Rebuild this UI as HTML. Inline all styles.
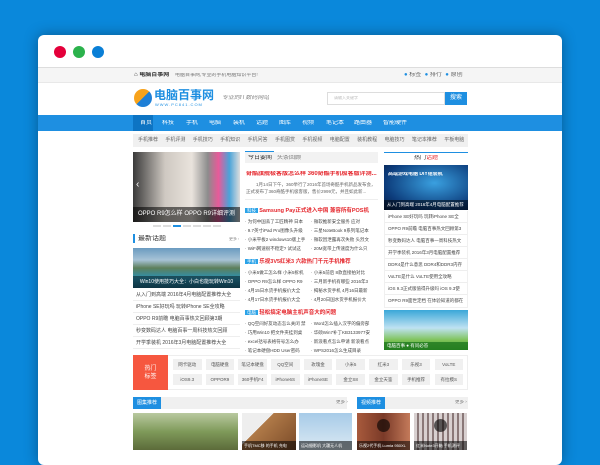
<!DOCTYPE html>
<html><head><meta charset="utf-8"><style>
*{margin:0;padding:0;box-sizing:border-box}
body{width:600px;height:450px;overflow:hidden;background:#0a88db;font-family:"Liberation Sans","Noto Sans CJK SC",sans-serif;position:relative;font-size:6px;color:#444;line-height:1}
.win{position:absolute;left:38px;top:35px;width:524px;height:430px;background:#fff;border-radius:6px;box-shadow:0 0 14px rgba(0,0,0,.35);overflow:hidden}
.a{position:absolute}
.dot{position:absolute;top:11px;width:12px;height:12px;border-radius:50%}
.t{white-space:nowrap;overflow:hidden}
.red{color:#e5262c}
.l12>div{line-height:12px;height:12px}
.g>div{line-height:9px;height:9px}
</style></head><body>
<div class="win">
<div class="dot" style="left:16px;background:#e4003a"></div>
<div class="dot" style="left:35px;background:#2bb24c"></div>
<div class="dot" style="left:54px;background:#0a7fd6"></div>
<div class="a" style="left:0;top:32px;width:524px;height:16px;background:#f5f5f5;border-top:1px solid #ddd;border-bottom:1px solid #e8e8e8"></div>
</div>
<div class="a t" style="left:134px;top:72px;font-weight:bold;color:#333">&#8962; 电脑百事网</div>
<div class="a t" style="left:175px;top:73px;color:#777;font-size:5px">电脑百事网,专业的手机电脑知识平台!</div>
<div class="a t" style="left:404px;top:72px;color:#666"><span style="color:#1e8fe1">●</span> 标签 &nbsp;<span style="color:#1e8fe1">●</span> 排行 &nbsp;<span style="color:#1e8fe1">●</span> 原创</div>
<div class="a" style="left:134px;top:89px;width:18px;height:18px;border-radius:50%;background:linear-gradient(135deg,#f7a21b 50%,#1e7fd6 50%)"></div>
<div class="a t" style="left:154px;top:89px;font-size:12px;font-weight:bold;color:#1e8fe1">电脑百事网</div>
<div class="a t" style="left:155px;top:103px;font-size:4px;color:#1e8fe1;letter-spacing:1px">WWW.PC841.COM</div>
<div class="a t" style="left:222px;top:95px;font-size:6px;color:#888;font-style:italic">专业的IT数码网站</div>
<div class="a" style="left:327px;top:92px;width:118px;height:13px;border:1px solid #ddd;background:#fff"></div>
<div class="a t" style="left:334px;top:96px;font-size:4px;color:#bbb">请输入关键字</div>
<div class="a" style="left:445px;top:92px;width:22px;height:13px;background:#1e8fe1;color:#fff;text-align:center;line-height:13px">搜索</div>
<div class="a" style="left:38px;top:115px;width:524px;height:16px;background:#1e8fe1"></div>
<div class="a" style="left:133px;top:115px;width:20px;height:16px;background:#0d74c3"></div>
<div class="a t" style="left:140px;top:120px;color:#fff">首页</div>
<div class="a t" style="left:162px;top:120px;color:#fff">科技</div>
<div class="a t" style="left:186px;top:120px;color:#fff">手机</div>
<div class="a t" style="left:209px;top:120px;color:#fff">电脑</div>
<div class="a t" style="left:233px;top:120px;color:#fff">装机</div>
<div class="a t" style="left:256px;top:120px;color:#fff">话题</div>
<div class="a t" style="left:279px;top:120px;color:#fff">图库</div>
<div class="a t" style="left:302px;top:120px;color:#fff">视频</div>
<div class="a t" style="left:326px;top:120px;color:#fff">笔记本</div>
<div class="a t" style="left:354px;top:120px;color:#fff">路由器</div>
<div class="a t" style="left:383px;top:120px;color:#fff">智能硬件</div>
<div class="a t" style="left:133px;top:134px;width:335px;height:13px;background:#f0f0f0;color:#666;font-size:5px;line-height:13px;padding-left:5px;word-spacing:6px">手机推荐 手机评测 手机技巧 手机知识 手机问答 手机图赏 手机视频 电脑配置 装机教程 电脑技巧 笔记本推荐 平板电脑</div>
<div class="a" style="left:133px;top:152px;width:107px;height:70px;background:linear-gradient(90deg,#3a3a3a 0,#cfc9c2 30%,#e9e3dc 55%,#8c8c8c 70%,#e85a9a 80%,#4aa3d8 90%,#ddd 100%)"></div>
<div class="a t" style="left:133px;top:207px;width:107px;height:15px;background:rgba(0,0,0,.55);color:#fff;font-size:6px;line-height:15px;text-align:center">OPPO R9怎么样 OPPO R9详细评测</div>
<div class="a t" style="left:136px;top:180px;color:#fff;font-size:10px">‹</div>
<div class="a" style="left:153px;top:225px;width:70px;height:2px;background:repeating-linear-gradient(90deg,#ddd 0 8px,transparent 8px 10px)"></div>
<div class="a" style="left:173px;top:225px;width:8px;height:2px;background:#1e8fe1"></div>
<div class="a" style="left:133px;top:234px;width:2px;height:9px;background:#1e8fe1"></div>
<div class="a t" style="left:138px;top:235px;font-size:7px;color:#333">最新话题</div>
<div class="a t" style="left:229px;top:237px;font-size:4px;color:#888">更多 ›</div>
<div class="a" style="left:133px;top:248px;width:107px;height:40px;background:linear-gradient(180deg,#6a9bc0 0,#a7c3d6 30%,#5d7f5a 50%,#2c8fb0 75%,#1a5f7a 100%)"></div>
<div class="a t" style="left:133px;top:276px;width:107px;height:12px;background:rgba(0,0,0,.45);color:#fff;font-size:5px;line-height:12px;text-align:center">Win10使用技巧大全：小白也能玩转Win10</div>
<div class="a l12" style="left:133px;top:289px;width:107px;font-size:5px;color:#444">
<div class="t" style="border-bottom:1px solid #eee;padding-left:3px">从入门到高端 2016年4月电脑配置推荐大全</div>
<div class="t" style="border-bottom:1px solid #eee;padding-left:3px">iPhone SE好玩吗 玩转iPhone SE全攻略</div>
<div class="t" style="border-bottom:1px solid #eee;padding-left:3px">OPPO R9前瞻 电脑百事热文回顾第3期</div>
<div class="t" style="border-bottom:1px solid #eee;padding-left:3px">秒变数码达人 电脑百事一周科技热文回顾</div>
<div class="t" style="border-bottom:1px solid #eee;padding-left:3px">开学季装机 2016年3月电脑配置推荐大全</div>
</div>
<div class="a" style="left:245px;top:152px;width:133px;height:11px;background:#f2f2f2"></div>
<div class="a" style="left:245px;top:151px;width:29px;height:1px;background:#1e8fe1"></div>
<div class="a t" style="left:248px;top:155px;font-size:6px;color:#333">今日要闻 &nbsp;&nbsp;<span style="color:#777">头条回顾</span></div>
<div class="a t red" style="left:246px;top:171px;font-weight:bold;font-size:6px;width:132px">奇酷旗舰极客版怎么样 360奇酷手机极客版评测...</div>
<div class="a" style="left:246px;top:181px;width:132px;font-size:4.5px;color:#666;line-height:7px;text-indent:10px">1月14日下午，360举行了2016年首场奇酷手机新品发布会，正式发布了360奇酷手机极客版，售价2999元，并且如此新...</div>
<div class="a" style="left:245px;top:199px;width:133px;height:1px;background:#eee"></div>
<div class="a" style="left:245px;top:205px;width:133px;font-size:4.5px;color:#444">
<div style="height:11px;line-height:11px" class="t"><span style="background:#2ba3e8;color:#fff;padding:0 2px">科技</span> <b class="red" style="font-size:5.5px">Samsung Pay正式进入中国 兼容所有POS机</b></div>
<div class="g" style="display:grid;grid-template-columns:66px 66px;margin-top:1px">
<div class="t">· 为何中国丢了工匠精神 日本</div><div class="t">· 微软推新安全服务 应对</div>
<div class="t">· 9.7英寸iPad Pro图像头升级</div><div class="t">· 三星NoteBook 9系列笔记本</div>
<div class="t">· 小米平板2 windows10版上手</div><div class="t">· 微软因泄露再次失败 头烈文</div>
<div class="t">· WiFi网速很不稳定? 试试这</div><div class="t">· 20M宽带上传速度为什么只</div>
</div>
<div style="height:11px;line-height:11px;margin-top:3px" class="t"><span style="background:#2ba3e8;color:#fff;padding:0 2px">手机</span> <b class="red" style="font-size:5.5px">乐视3V5红米3 六款热门千元手机推荐</b></div>
<div class="g" style="display:grid;grid-template-columns:66px 66px;margin-top:1px">
<div class="t">· 小米5做工怎么样 小米5拆机</div><div class="t">· 小米5前后 8款直接拍对比</div>
<div class="t">· OPPO R9怎么样 OPPO R9</div><div class="t">· 三月新手机有哪些 2016年3</div>
<div class="t">· 4月15日水货手机报价大全</div><div class="t">· 揭秘水货手机 4月16日最新</div>
<div class="t">· 4月17日水货手机报价大全</div><div class="t">· 4月20日国水货手机报价大</div>
</div>
<div style="height:11px;line-height:11px;margin-top:3px" class="t"><span style="background:#2ba3e8;color:#fff;padding:0 2px">电脑</span> <b class="red" style="font-size:5.5px">轻松搞定电脑主机声音大的问题</b></div>
<div class="g" style="display:grid;grid-template-columns:66px 66px;margin-top:1px">
<div class="t">· QQ空间好友动态怎么关闭 禁</div><div class="t">· Word怎么插入汉字的偏旁部</div>
<div class="t">· 巧用Win10 把文件夹挂到桌</div><div class="t">· 华硕Win7补丁KB3133977安</div>
<div class="t">· excel括号表格符号怎么办</div><div class="t">· 新浪看点怎么申请 新浪看点</div>
<div class="t">· 笔记本硬盘HDD User密码</div><div class="t">· WPS2016怎么生成目录</div>
</div>
</div>
<div class="a" style="left:384px;top:152px;width:84px;height:1px;background:#1e8fe1"></div>
<div class="a t" style="left:384px;top:155px;width:84px;text-align:center;font-size:6px;color:#333">热门<span class="red">话题</span></div>
<div class="a" style="left:384px;top:165px;width:84px;height:45px;background:radial-gradient(ellipse at 60% 40%,#3aa0e0,#0c3b7a 70%,#061d44)"></div>
<div class="a t" style="left:388px;top:172px;color:#fff;font-size:5px;font-weight:bold">高端游戏电脑 DIY组装机</div>
<div class="a t" style="left:384px;top:200px;width:84px;height:10px;background:rgba(0,0,0,.5);color:#fff;font-size:4.5px;line-height:10px;padding-left:3px">从入门到高端 2016年4月电脑配置推荐</div>
<div class="a l12" style="left:384px;top:211px;width:84px;font-size:4.5px;color:#444;border:1px solid #f0f0f0;border-top:0">
<div class="t" style="border-bottom:1px solid #eee;padding-left:3px">iPhone SE好玩吗 玩转iPhone SE全</div>
<div class="t" style="border-bottom:1px solid #eee;padding-left:3px">OPPO R9前瞻 电脑百事热文回顾第3</div>
<div class="t" style="border-bottom:1px solid #eee;padding-left:3px">秒变数码达人 电脑百事一周科技热文</div>
<div class="t" style="border-bottom:1px solid #eee;padding-left:3px">开学季装机 2016年3月电脑配置推荐</div>
<div class="t" style="border-bottom:1px solid #eee;padding-left:3px">DDR4是什么意思 DDR4和DDR3内存</div>
<div class="t" style="border-bottom:1px solid #eee;padding-left:3px">VoLTE是什么 VoLTE使用全攻略</div>
<div class="t" style="border-bottom:1px solid #eee;padding-left:3px">iOS 9.3正式版值得升级吗 iOS 9.3使</div>
<div class="t" style="padding-left:3px">OPPO R9面世定档 在体验知道的都在</div>
</div>
<div class="a" style="left:384px;top:310px;width:84px;height:40px;background:linear-gradient(180deg,#3aa7d8 0,#bfe2f2 45%,#7fc35a 75%,#3d9a2a 100%)"></div>
<div class="a t" style="left:384px;top:342px;width:84px;height:8px;background:rgba(30,120,30,.8);color:#fff;font-size:4.5px;line-height:8px;padding-left:3px">电脑百事 ● 有问必答</div>
<div class="a" style="left:133px;top:355px;width:335px;height:35px;border:1px solid #eee"></div>
<div class="a" style="left:133px;top:355px;width:35px;height:35px;background:#f6573f;color:#fff;font-size:6px;text-align:center;line-height:8px;padding-top:10px">热门<br>标签</div>
<div class="a" style="left:173px;top:359px;width:294px;display:grid;grid-template-columns:repeat(9,28.5px);column-gap:4.2px;row-gap:4px;font-size:4.5px;color:#555;text-align:center">
<div style="background:#f0f0f0;height:11px;line-height:11px">网卡驱动</div><div style="background:#f0f0f0;line-height:11px">电脑硬盘</div><div style="background:#f0f0f0;line-height:11px">笔记本硬盘</div><div style="background:#f0f0f0;line-height:11px">QQ空间</div><div style="background:#f0f0f0;line-height:11px">玫瑰金</div><div style="background:#f0f0f0;line-height:11px">小米5</div><div style="background:#f0f0f0;line-height:11px">红米3</div><div style="background:#f0f0f0;line-height:11px">乐视3</div><div style="background:#f0f0f0;line-height:11px">VoLTE</div>
<div style="background:#f0f0f0;height:11px;line-height:11px">iOS9.3</div><div style="background:#f0f0f0;line-height:11px">OPPOR9</div><div style="background:#f0f0f0;line-height:11px">360手机F4</div><div style="background:#f0f0f0;line-height:11px">iPhone6S</div><div style="background:#f0f0f0;line-height:11px">iPhoneSE</div><div style="background:#f0f0f0;line-height:11px">金立S8</div><div style="background:#f0f0f0;line-height:11px">金立天鉴</div><div style="background:#f0f0f0;line-height:11px">手机推荐</div><div style="background:#f0f0f0;line-height:11px">有拉模S</div>
</div>
<div class="a" style="left:133px;top:397px;width:214px;height:12px;background:#f0f0f0"></div>
<div class="a" style="left:133px;top:397px;width:28px;height:12px;background:#1e8fe1;color:#fff;font-size:5px;line-height:12px;text-align:center">图集推荐</div>
<div class="a t" style="left:336px;top:400px;font-size:4.5px;color:#777">更多 ›</div>
<div class="a" style="left:357px;top:397px;width:111px;height:12px;background:#f0f0f0"></div>
<div class="a" style="left:357px;top:397px;width:28px;height:12px;background:#1e8fe1;color:#fff;font-size:5px;line-height:12px;text-align:center">视频推荐</div>
<div class="a t" style="left:455px;top:400px;font-size:4.5px;color:#777">更多 ›</div>
<div class="a" style="left:133px;top:413px;width:105px;height:37px;background:linear-gradient(180deg,#b9c9a0,#7f9a5a 50%,#5c6b3a)"></div>
<div class="a" style="left:242px;top:413px;width:54px;height:37px;background:linear-gradient(135deg,#eee 0 35%,#b07a48 35%,#7a4a28)"></div>
<div class="a" style="left:299px;top:413px;width:53px;height:37px;background:linear-gradient(180deg,#a7cbe8,#dbe9f3)"></div>
<div class="a" style="left:357px;top:413px;width:53px;height:37px;background:linear-gradient(90deg,#a85a3c,#7a3a28 50%,#c47a5a)"></div>
<div class="a" style="left:414px;top:413px;width:53px;height:37px;background:repeating-linear-gradient(90deg,#d8d0d0 0 3px,#8a7878 3px 5px)"></div>
<div class="a t" style="left:242px;top:441px;width:54px;height:9px;background:rgba(0,0,0,.55);color:#fff;font-size:4px;line-height:9px;padding-left:2px">手机TMC移 的手机 充电</div>
<div class="a t" style="left:299px;top:441px;width:53px;height:9px;background:rgba(0,0,0,.55);color:#fff;font-size:4px;line-height:9px;padding-left:2px">运动摄影机 大疆无人机</div>
<div class="a t" style="left:357px;top:441px;width:53px;height:9px;background:rgba(0,0,0,.55);color:#fff;font-size:4px;line-height:9px;padding-left:2px">乐视2代手机 Lumia 950XL</div>
<div class="a t" style="left:414px;top:441px;width:53px;height:9px;background:rgba(0,0,0,.55);color:#fff;font-size:4px;line-height:9px;padding-left:2px">红米Note3开箱 手机测评</div>
<div class="a" style="left:377px;top:419px;width:13px;height:13px;border-radius:50%;background:rgba(0,0,0,.6)"></div>
<div class="a" style="left:434px;top:419px;width:13px;height:13px;border-radius:50%;background:rgba(0,0,0,.6)"></div>
</body></html>
